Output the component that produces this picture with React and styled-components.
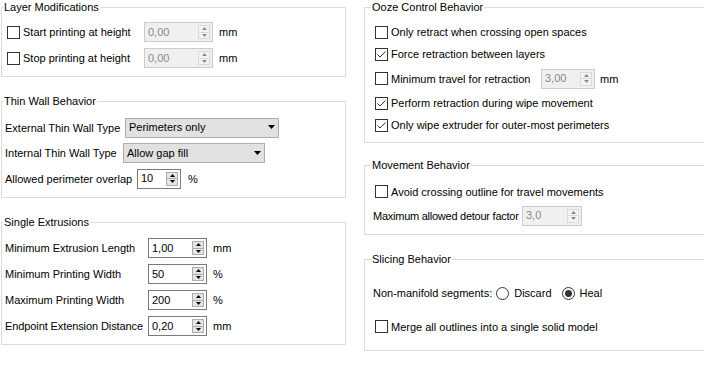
import React from 'react';
import styled, { createGlobalStyle } from 'styled-components';

const GlobalStyle = createGlobalStyle`
  html, body {
    margin: 0;
    padding: 0;
    background: #fff;
  }
  body {
    font-family: "Liberation Sans", Arial, sans-serif;
    font-size: 11px;
    color: #000;
  }
`;

const Page = styled.div`
  display: flex;
  gap: 18px;
  padding-left: 1px;
  width: 704px;
  height: 366px;
  overflow: hidden;
  box-sizing: border-box;
`;

const Column = styled.div`
  display: flex;
  flex-direction: column;
  flex: 0 0 345px;
`;

const Group = styled.fieldset`
  box-sizing: border-box;
  margin: ${(p) => p.$top || 0}px 0 0;
  padding: 0;
  min-width: 0;
  height: ${(p) => p.$height}px;
  border: 1px solid #dcdcdc;
`;

const Legend = styled.legend`
  margin-left: ${(p) => p.$indent}px;
  padding: 0 1px;
  line-height: 14px;
`;

const Body = styled.div`
  padding: ${(p) => p.$pt}px 0 0 ${(p) => p.$pl}px;
`;

const Row = styled.div`
  display: flex;
  align-items: center;
  height: ${(p) => p.$h}px;
  margin-top: ${(p) => p.$mt || 0}px;
  white-space: nowrap;
`;

const Label = styled.span`
  flex: none;
  width: ${(p) => (p.$w ? `${p.$w}px` : 'auto')};
  letter-spacing: ${(p) => p.$ls || 0}px;
`;

const Unit = styled.span`
  margin-left: ${(p) => p.$ml}px;
`;

const Box = styled.span`
  box-sizing: border-box;
  flex: none;
  width: 13px;
  height: 13px;
  border: 1px solid #333;
  background: #fff;
  margin: 0 3px 0 2px;
  display: inline-flex;
  align-items: center;
  justify-content: center;
`;

const Check = ({ checked }) => (
  <Box>
    {checked && (
      <svg width="11" height="11" viewBox="0 0 11 11">
        <path d="M1.5 5.5 L4 8 L9.5 2.5" fill="none" stroke="#333" strokeWidth="1" />
      </svg>
    )}
  </Box>
);

const RadioRing = styled.span`
  box-sizing: border-box;
  flex: none;
  width: 13px;
  height: 13px;
  border-radius: 50%;
  border: 1px solid #333;
  background: #fff;
  margin: 0 5px 0 ${(p) => p.$ml}px;
  display: inline-flex;
  align-items: center;
  justify-content: center;
`;

const RadioDot = styled.span`
  width: 7px;
  height: 7px;
  border-radius: 50%;
  background: #333;
`;

const Radio = ({ checked, ml }) => (
  <RadioRing $ml={ml}>{checked && <RadioDot />}</RadioRing>
);

const Spin = styled.div`
  box-sizing: border-box;
  flex: none;
  width: ${(p) => p.$w}px;
  height: 20px;
  border: 1px solid ${(p) => (p.$off ? '#cccccc' : '#7a7a7a')};
  background: ${(p) => (p.$off ? '#f0f0f0' : '#fff')};
  color: ${(p) => (p.$off ? '#8a8a8a' : '#000')};
  display: flex;
  align-items: center;
  padding: 0 2px 1px 3px;
`;

const SpinValue = styled.span`
  flex: 1;
`;

const SpinButtons = styled.span`
  box-sizing: border-box;
  width: 12px;
  height: 14px;
  border: 1px solid ${(p) => (p.$off ? '#dadada' : '#adadad')};
  background: ${(p) => (p.$off ? '#f4f4f4' : '#e5e5e5')};
  display: flex;
  flex-direction: column;
  margin-top: 1px;
`;

const SpinHalf = styled.span`
  flex: 1;
  display: flex;
  align-items: center;
  justify-content: center;
  border-top: ${(p) => (p.$lower ? `1px solid ${p.$off ? '#dadada' : '#adadad'}` : 'none')};
`;

const Arrow = ({ down, color }) => (
  <svg width="5" height="3" viewBox="0 0 5 3">
    <path d={down ? 'M0 0 H5 L2.5 3 Z' : 'M0 3 H5 L2.5 0 Z'} fill={color} />
  </svg>
);

const SpinBox = ({ value, width, off }) => (
  <Spin $w={width} $off={off}>
    <SpinValue>{value}</SpinValue>
    <SpinButtons $off={off}>
      <SpinHalf $off={off}>
        <Arrow color={off ? '#8a8a8a' : '#000'} />
      </SpinHalf>
      <SpinHalf $lower $off={off}>
        <Arrow down color={off ? '#8a8a8a' : '#000'} />
      </SpinHalf>
    </SpinButtons>
  </Spin>
);

const Combo = styled.div`
  box-sizing: border-box;
  flex: none;
  width: ${(p) => p.$w}px;
  height: 20px;
  border: 1px solid #adadad;
  background: #e1e1e1;
  display: flex;
  align-items: center;
  justify-content: space-between;
  padding: 0 3px 1px 3px;
`;

const ComboBox = ({ value, width }) => (
  <Combo $w={width}>
    <span>{value}</span>
    <svg width="7" height="4" viewBox="0 0 7 4">
      <path d="M0 0 H7 L3.5 4 Z" fill="#000" />
    </svg>
  </Combo>
);

export default function App() {
  return (
    <>
      <GlobalStyle />
      <Page>
        <Column>
          <Group $height={77}>
            <Legend $indent={1}>Layer Modifications</Legend>
            <Body $pt={5} $pl={3}>
              <Row $h={26}>
                <Check />
                <Label $w={121}>Start printing at height</Label>
                <SpinBox value="0,00" width={69} off />
                <Unit $ml={6}>mm</Unit>
              </Row>
              <Row $h={26}>
                <Check />
                <Label $w={121}>Stop printing at height</Label>
                <SpinBox value="0,00" width={69} off />
                <Unit $ml={6}>mm</Unit>
              </Row>
            </Body>
          </Group>

          <Group $top={17} $height={104}>
            <Legend $indent={1}>Thin Wall Behavior</Legend>
            <Body $pt={7} $pl={3}>
              <Row $h={25}>
                <Label $w={120}>External Thin Wall Type</Label>
                <ComboBox value="Perimeters only" width={154} />
              </Row>
              <Row $h={26}>
                <Label $w={118}>Internal Thin Wall Type</Label>
                <ComboBox value="Allow gap fill" width={142} />
              </Row>
              <Row $h={25}>
                <Label $w={132}>Allowed perimeter overlap</Label>
                <SpinBox value="10" width={44} />
                <Unit $ml={7}>%</Unit>
              </Row>
            </Body>
          </Group>

          <Group $top={17} $height={130}>
            <Legend $indent={1}>Single Extrusions</Legend>
            <Body $pt={6} $pl={3}>
              <Row $h={26}>
                <Label $w={143}>Minimum Extrusion Length</Label>
                <SpinBox value="1,00" width={59} />
                <Unit $ml={6}>mm</Unit>
              </Row>
              <Row $h={26}>
                <Label $w={143}>Minimum Printing Width</Label>
                <SpinBox value="50" width={59} />
                <Unit $ml={6}>%</Unit>
              </Row>
              <Row $h={26}>
                <Label $w={143}>Maximum Printing Width</Label>
                <SpinBox value="200" width={59} />
                <Unit $ml={6}>%</Unit>
              </Row>
              <Row $h={26}>
                <Label $w={143} $ls={-0.1}>Endpoint Extension Distance</Label>
                <SpinBox value="0,20" width={59} />
                <Unit $ml={6}>mm</Unit>
              </Row>
            </Body>
          </Group>
        </Column>

        <Column>
          <Group $height={143}>
            <Legend $indent={6}>Ooze Control Behavior</Legend>
            <Body $pt={7} $pl={8}>
              <Row $h={22}>
                <Check />
                <Label>Only retract when crossing open spaces</Label>
              </Row>
              <Row $h={22}>
                <Check checked />
                <Label>Force retraction between layers</Label>
              </Row>
              <Row $h={27}>
                <Check />
                <Label $w={150}>Minimum travel for retraction</Label>
                <SpinBox value="3,00" width={54} off />
                <Unit $ml={5}>mm</Unit>
              </Row>
              <Row $h={22}>
                <Check checked />
                <Label>Perform retraction during wipe movement</Label>
              </Row>
              <Row $h={22}>
                <Check checked />
                <Label>Only wipe extruder for outer-most perimeters</Label>
              </Row>
            </Body>
          </Group>

          <Group $top={15} $height={77}>
            <Legend $indent={6}>Movement Behavior</Legend>
            <Body $pt={8} $pl={8}>
              <Row $h={23}>
                <Check />
                <Label>Avoid crossing outline for travel movements</Label>
              </Row>
              <Row $h={25}>
                <Label $w={149} $ls={-0.25}>Maximum allowed detour factor</Label>
                <SpinBox value="3,0" width={60} off />
              </Row>
            </Body>
          </Group>

          <Group $top={17} $height={99}>
            <Legend $indent={6}>Slicing Behavior</Legend>
            <Body $pt={14} $pl={8}>
              <Row $h={26}>
                <Label>Non-manifold segments:</Label>
                <Radio ml={4} />
                <Label>Discard</Label>
                <Radio ml={10} checked />
                <Label>Heal</Label>
              </Row>
              <Row $h={25} $mt={8}>
                <Check />
                <Label>Merge all outlines into a single solid model</Label>
              </Row>
            </Body>
          </Group>
        </Column>
      </Page>
    </>
  );
}
